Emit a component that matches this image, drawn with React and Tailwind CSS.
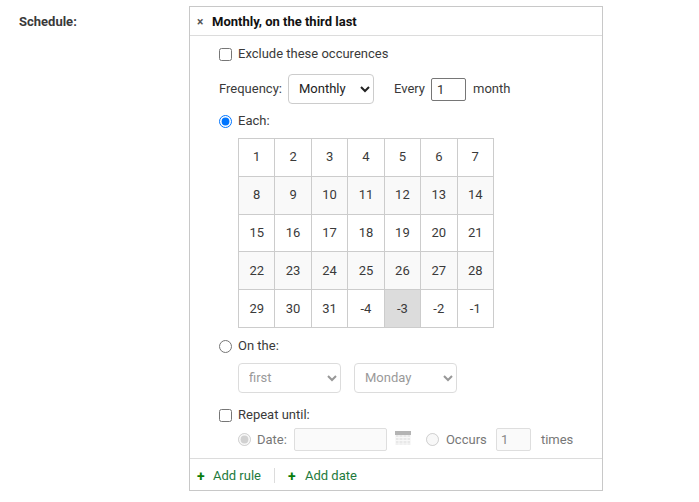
import React from "react";

const rows = [
  ["1", "2", "3", "4", "5", "6", "7"],
  ["8", "9", "10", "11", "12", "13", "14"],
  ["15", "16", "17", "18", "19", "20", "21"],
  ["22", "23", "24", "25", "26", "27", "28"],
  ["29", "30", "31", "-4", "-3", "-2", "-1"],
];

export default function App() {
  return (
    <div className="flex h-[502px] w-[699px] items-start bg-white pt-[6px] font-['Roboto',sans-serif] text-[13px] leading-[16px] text-[#3a3a3a]">
      <div className="w-[189px] pl-[19px] pt-[8px] font-bold">Schedule:</div>
      <div className="w-[414px] border border-[#c8c8c8]">
        <div className="flex h-[29px] items-center border-b border-[#dcdcdc] pl-[7px] pt-[1px] font-bold text-[#111]">
          <span className="w-[15px] text-[12px] text-[#555]">×</span>
          <span>Monthly, on the third last</span>
        </div>

        <div className="pl-[29px] pr-[12px]">
          <label className="mt-[10px] flex h-[16px] items-center gap-[6px]">
            <input type="checkbox" className="m-0 h-[13px] w-[13px]" />
            Exclude these occurences
          </label>

          <div className="mt-[12px] flex h-[30px] items-center">
            <span className="w-[69px]">Frequency:</span>
            <select className="h-[30px] w-[86px] rounded-[4px] border border-[#ccc] bg-white pb-[2px] pl-[6px] text-[13px] text-[#222]">
              <option>Monthly</option>
            </select>
            <span className="ml-[20px]">Every</span>
            <input
              readOnly
              value="1"
              className="ml-[6px] h-[23px] w-[35px] rounded-[2px] border border-[#767676] px-[5px] text-[13px] text-[#333] outline-none"
            />
            <span className="ml-[7px]">month</span>
          </div>

          <label className="mt-[9px] flex h-[16px] items-center gap-[6px]">
            <input type="radio" name="m" defaultChecked className="m-0 h-[13px] w-[13px]" />
            Each:
          </label>

          <table className="ml-[19px] mt-[9px] h-[190px] w-[256px] table-fixed border-collapse">
            <tbody>
              {rows.map((r, i) => (
                <tr key={i} className={i % 2 ? "bg-[#f9f9f9]" : "bg-white"}>
                  {r.map((c) => (
                    <td
                      key={c}
                      className={`border border-[#ccc] p-0 text-center text-[#3a3a3a] ${c === "-3" ? "bg-[#dcdcdc]" : ""}`}
                    >
                      {c}
                    </td>
                  ))}
                </tr>
              ))}
            </tbody>
          </table>

          <label className="mt-[10px] flex h-[16px] items-center gap-[6px]">
            <input type="radio" name="m" className="m-0 h-[13px] w-[13px]" />
            On the:
          </label>

          <div className="ml-[19px] mt-[9px] flex gap-[13px]">
            <select disabled className="h-[30px] w-[103px] rounded-[4px] border border-[#bbb] bg-white pb-[2px] pl-[6px] text-[13px] text-[#333] opacity-50">
              <option>first</option>
            </select>
            <select disabled className="h-[30px] w-[103px] rounded-[4px] border border-[#bbb] bg-white pb-[2px] pl-[6px] text-[13px] text-[#333] opacity-50">
              <option>Monday</option>
            </select>
          </div>

          <label className="mt-[14px] flex h-[16px] items-center gap-[6px]">
            <input type="checkbox" className="m-0 h-[13px] w-[13px]" />
            Repeat until:
          </label>

          <div className="ml-[19px] mt-[5px] flex h-[23px] items-center text-[#777]">
            <input type="radio" name="u" disabled defaultChecked className="m-0 h-[13px] w-[13px]" />
            <span className="ml-[6px]">Date:</span>
            <input disabled className="ml-[7px] h-[23px] w-[93px] rounded-[2px] border border-[#dedede] bg-[#fafafa]" />
            <svg viewBox="0 0 16 14" className="mb-[3px] ml-[8px] h-[14px] w-[16px]">
              <rect x="0" y="0" width="16" height="14" fill="#e8e8e8" />
              <rect x="0" y="0" width="16" height="4" fill="#b4b4b4" />
              <path d="M0.5 4v10M4 4v10M8 4v10M12 4v10M15.5 4v10M0 6.5h16M0 9.5h16M0 13h16" stroke="#f8f8f8" strokeWidth="1" />
            </svg>
            <input type="radio" name="u" disabled className="m-0 ml-[15px] h-[13px] w-[13px]" />
            <span className="ml-[7px] w-[40px] whitespace-nowrap">Occurs</span>
            <input
              disabled
              value="1"
              readOnly
              className="ml-[10px] h-[23px] w-[35px] rounded-[2px] border border-[#dedede] bg-[#fafafa] px-[4px] text-[13px] text-[#888]"
            />
            <span className="ml-[10px]">times</span>
          </div>
        </div>

        <div className="mt-[7px] flex h-[32px] items-center border-t border-[#dcdcdc] pl-[7px] pt-[2px] text-[#1e7a3c]">
          <span className="w-[16px] text-[14px] font-bold text-[#0a7d0a]">+</span>
          <span>Add rule</span>
          <span className="mx-[13px] h-[15px] w-px bg-[#dcdcdc]" />
          <span className="w-[17px] text-[14px] font-bold text-[#0a7d0a]">+</span>
          <span>Add date</span>
        </div>
      </div>
    </div>
  );
}
